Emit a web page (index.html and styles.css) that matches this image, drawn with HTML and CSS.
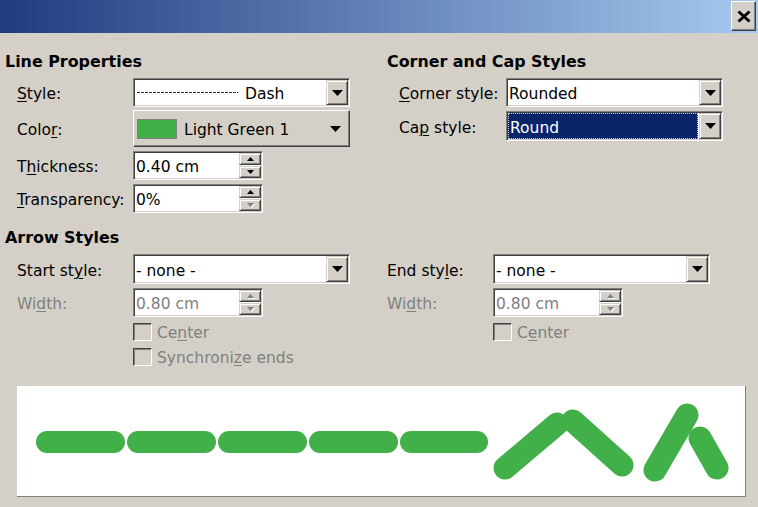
FILE: index.html
```html
<!DOCTYPE html>
<html lang="en">
<head>
<meta charset="utf-8">
<title>Line</title>
<link rel="stylesheet" href="styles.css">
</head>
<body>
<div class="titlebar">
  <div class="close"><svg width="14" height="13" viewBox="0 0 14 13"><path d="M1.5 1.5L12.5 11.5M12.5 1.5L1.5 11.5" stroke="#000" stroke-width="3"/></svg></div>
</div>
<div class="content">
  <div class="two">
    <section class="col">
      <div class="heading">Line Properties</div>
      <div class="rows">
        <div class="row h29"><span class="lbl w128"><u>S</u>tyle:</span>
          <div class="field list"><div class="val"><span class="dashline"></span><span class="dashname">Dash</span></div><div class="ddbtn"><svg width="11" height="6" viewBox="0 0 11 6"><path d="M0 0h11L5.5 6z"/></svg></div></div>
        </div>
        <div class="row h37 colorrow"><span class="lbl w128">Colo<u>r</u>:</span>
          <div class="colorbtn"><span class="swatch"></span><span class="cname">Light Green 1</span><svg class="ctri" width="11" height="6" viewBox="0 0 11 6"><path d="M0 0h11L5.5 6z"/></svg></div>
        </div>
        <div class="row h29"><span class="lbl w128">T<u>h</u>ickness:</span>
          <div class="field spin"><div class="val">0.40 cm</div><div class="spbtns"><div class="spb"><svg width="7" height="4" viewBox="0 0 7 4"><path d="M0 4h7L3.5 0z"/></svg></div><div class="spb"><svg width="7" height="4" viewBox="0 0 7 4"><path d="M0 0h7L3.5 4z"/></svg></div></div></div>
        </div>
        <div class="row h29"><span class="lbl w128"><u>T</u>ransparency:</span>
          <div class="field spin"><div class="val">0%</div><div class="spbtns"><div class="spb"><svg width="7" height="4" viewBox="0 0 7 4"><path d="M0 4h7L3.5 0z"/></svg></div><div class="spb dis"><svg width="7" height="4" viewBox="0 0 7 4"><path d="M0 0h7L3.5 4z"/></svg></div></div></div>
        </div>
      </div>
    </section>
    <section class="col">
      <div class="heading">Corner and Cap Styles</div>
      <div class="rows">
        <div class="row h29"><span class="lbl w119"><u>C</u>orner style:</span>
          <div class="field list"><div class="val">Rounded</div><div class="ddbtn"><svg width="11" height="6" viewBox="0 0 11 6"><path d="M0 0h11L5.5 6z"/></svg></div></div>
        </div>
        <div class="row h30"><span class="lbl w119">Ca<u>p</u> style:</span>
          <div class="field list"><div class="val sel">Round</div><div class="ddbtn"><svg width="11" height="6" viewBox="0 0 11 6"><path d="M0 0h11L5.5 6z"/></svg></div></div>
        </div>
      </div>
    </section>
  </div>

  <div class="heading arrowhead">Arrow Styles</div>
  <div class="two">
    <div class="rows">
      <div class="row h30"><span class="lbl w128">Start st<u>y</u>le:</span>
        <div class="field list"><div class="val">- none -</div><div class="ddbtn"><svg width="11" height="6" viewBox="0 0 11 6"><path d="M0 0h11L5.5 6z"/></svg></div></div>
      </div>
      <div class="row h29"><span class="lbl w128 off">Wi<u>d</u>th:</span>
        <div class="field spin"><div class="val off">0.80 cm</div><div class="spbtns"><div class="spb dis"><svg width="7" height="4" viewBox="0 0 7 4"><path d="M0 4h7L3.5 0z"/></svg></div><div class="spb dis"><svg width="7" height="4" viewBox="0 0 7 4"><path d="M0 0h7L3.5 4z"/></svg></div></div></div>
      </div>
      <div class="row h19 chkrow c1"><span class="chk"></span><span class="off ctext">Ce<u>n</u>ter</span></div>
      <div class="row h19 chkrow c2"><span class="chk"></span><span class="off ctext">Synchroni<u>z</u>e ends</span></div>
    </div>
    <div class="rows">
      <div class="row h30"><span class="lbl w106">End sty<u>l</u>e:</span>
        <div class="field list"><div class="val">- none -</div><div class="ddbtn"><svg width="11" height="6" viewBox="0 0 11 6"><path d="M0 0h11L5.5 6z"/></svg></div></div>
      </div>
      <div class="row h29"><span class="lbl w106 off">Wi<u>d</u>th:</span>
        <div class="field spin"><div class="val off">0.80 cm</div><div class="spbtns"><div class="spb dis"><svg width="7" height="4" viewBox="0 0 7 4"><path d="M0 4h7L3.5 0z"/></svg></div><div class="spb dis"><svg width="7" height="4" viewBox="0 0 7 4"><path d="M0 0h7L3.5 4z"/></svg></div></div></div>
      </div>
      <div class="row h19 chkrow c1 r"><span class="chk"></span><span class="off ctext">C<u>e</u>nter</span></div>
    </div>
  </div>

  <div class="preview">
    <svg width="729" height="111" viewBox="0 0 729 111">
      <g fill="#41b048">
        <rect x="19" y="45" width="89" height="22" rx="11"/>
        <rect x="110" y="45" width="89" height="22" rx="11"/>
        <rect x="201" y="45" width="89" height="22" rx="11"/>
        <rect x="292" y="45" width="89" height="22" rx="11"/>
        <rect x="383" y="45" width="88" height="22" rx="11"/>
      </g>
      <g stroke="#41b048" stroke-width="23" stroke-linecap="round" fill="none">
        <line x1="488" y1="82" x2="540" y2="38"/>
        <line x1="556" y1="35" x2="605" y2="79"/>
        <line x1="638" y1="84" x2="670" y2="29"/>
        <line x1="683" y1="52" x2="700" y2="82"/>
      </g>
    </svg>
  </div>
</div>
</body>
</html>
```

FILE: styles.css
```css
html, body {
  margin: 0;
  padding: 0;
}
body {
  width: 758px;
  height: 507px;
  overflow: hidden;
  background: #d4d0c8;
  font-family: "DejaVu Sans", sans-serif;
  font-size: 15.5px;
  color: #000;
}
.titlebar {
  height: 33px;
  background: linear-gradient(to right, #203c7f, #a6caf0);
  display: flex;
  justify-content: flex-end;
  align-items: flex-start;
  padding-right: 2px;
}
.close {
  width: 25px;
  height: 30px;
  margin-top: 1px;
  box-sizing: border-box;
  background: #d4d0c8;
  border: 1px solid;
  border-color: #fff #404040 #404040 #fff;
  box-shadow: inset -1px -1px #808080;
  display: flex;
  align-items: center;
  justify-content: center;
}
.content {
  padding: 19px 0 0 5px;
}
.two {
  display: grid;
  grid-template-columns: 382px 1fr;
}
.heading {
  height: 20px;
  line-height: 20px;
  font-weight: bold;
  font-size: 15.9px;
  margin-bottom: 6px;
  white-space: nowrap;
}
.arrowhead {
  margin-top: 15px;
  margin-bottom: 6px;
}
.rows {
  display: flex;
  flex-direction: column;
  gap: 4px;
}
.row {
  display: flex;
  align-items: center;
  white-space: nowrap;
}
.h29 { height: 29px; }
.h30 { height: 30px; }
.h37 { height: 37px; }
.h19 { height: 19px; }
.colorrow { margin-top: -1px; }
.lbl {
  flex: none;
  box-sizing: border-box;
  padding-left: 12px;
  padding-top: 3px;
}
.w128 { width: 128px; }
.w119 { width: 119px; }
.w106 { width: 106px; padding-left: 0; }
u {
  text-decoration: underline;
  text-underline-offset: 2px;
  text-decoration-thickness: 1px;
}
.off { color: #808080; }
.ctext { padding-top: 2px; }

.field {
  box-sizing: border-box;
  height: 100%;
  background: #fff;
  border: 1px solid;
  border-color: #808080 #fff #fff #808080;
  box-shadow: inset 1px 1px #404040, inset -1px -1px #d4d0c8;
  padding: 1px;
  display: flex;
  align-items: stretch;
}
.list { width: 217px; }
.spin { width: 130px; }
.val {
  flex: 1;
  display: flex;
  align-items: center;
  padding-left: 1px;
  padding-top: 3px;
  min-width: 0;
}
.sel {
  background: #0a246a;
  color: #fff;
  outline: 1px dotted #d0d0d0;
  outline-offset: -1px;
  padding-left: 2px;
  margin-right: 1px;
}
.dashline {
  width: 101px;
  height: 1px;
  background: repeating-linear-gradient(to right, #333 0 3px, transparent 3px 4px);
  margin-left: 1px;
  margin-top: -3px;
}
.dashname { margin-left: 7px; }
.ddbtn {
  flex: none;
  width: 22px;
  box-sizing: border-box;
  background: #d4d0c8;
  border: 1px solid;
  border-color: #d4d0c8 #404040 #404040 #d4d0c8;
  box-shadow: inset 1px 1px #fff, inset -1px -1px #808080;
  display: flex;
  align-items: center;
  justify-content: center;
}
.spbtns {
  flex: none;
  width: 22px;
  display: flex;
  flex-direction: column;
  gap: 1px;
}
.spb {
  flex: 1;
  box-sizing: border-box;
  background: #d4d0c8;
  border: 1px solid;
  border-color: #d4d0c8 #404040 #404040 #d4d0c8;
  box-shadow: inset 1px 1px #fff, inset -1px -1px #808080;
  display: flex;
  align-items: center;
  justify-content: center;
}
.spb.dis svg {
  fill: #808080;
  filter: drop-shadow(1px 1px 0 #fff);
}
.colorbtn {
  box-sizing: border-box;
  width: 217px;
  height: 37px;
  background: #d4d0c8;
  border: 1px solid;
  border-color: #fff #404040 #404040 #fff;
  box-shadow: inset -1px -1px #808080;
  display: flex;
  align-items: center;
  padding: 0 8px 0 3px;
}
.swatch {
  width: 40px;
  height: 20px;
  box-sizing: border-box;
  background: #41b048;
  border: 1px solid #808080;
  flex: none;
}
.cname { margin-left: 7px; padding-top: 3px; }
.ctri { margin-left: auto; }

.chkrow { padding-left: 128px; }
.chkrow.r { padding-left: 106px; }
.c1 { margin-top: 1px; }
.c2 { margin-top: 2px; }
.chk {
  width: 19px;
  height: 18px;
  box-sizing: border-box;
  background: #d4d0c8;
  border: 1px solid;
  border-color: #404040 #fff #fff #404040;
  box-shadow: inset 1px 1px #808080, inset -1px -1px #d4d0c8;
  margin-right: 5px;
  flex: none;
}
.preview {
  margin: 20px 0 0 12px;
  width: 729px;
  height: 111px;
  box-sizing: border-box;
  background: #fff;
  border-right: 1px solid #808080;
  border-bottom: 1px solid #808080;
}
.preview svg { display: block; }
```
